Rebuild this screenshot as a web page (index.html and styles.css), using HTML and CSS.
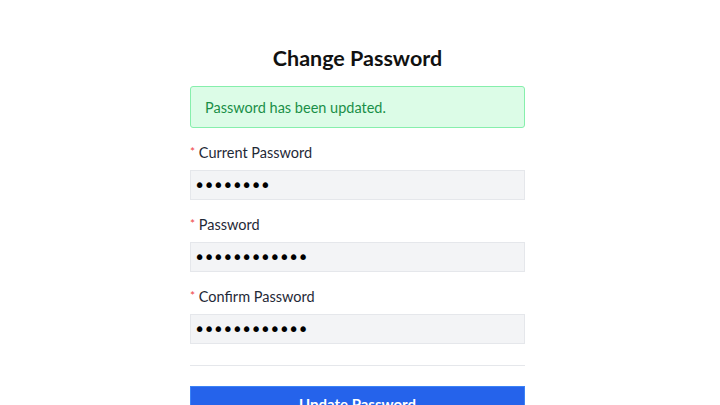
FILE: index.html
```html
<!DOCTYPE html>
<html lang="en">
<head>
<meta charset="utf-8">
<title>Change Password</title>
<link rel="stylesheet" href="styles.css">
</head>
<body>
<main class="page">
  <form class="card">
    <h1 class="title">Change Password</h1>
    <div class="alert">Password has been updated.</div>
    <div class="field">
      <label class="label"><span class="req">*</span> Current Password</label>
      <input class="input" type="password" value="12345678">
    </div>
    <div class="field">
      <label class="label"><span class="req">*</span> Password</label>
      <input class="input" type="password" value="123456789012">
    </div>
    <div class="field">
      <label class="label"><span class="req">*</span> Confirm Password</label>
      <input class="input" type="password" value="123456789012">
    </div>
    <hr class="divider">
    <button class="btn" type="button">Update Password</button>
  </form>
</main>
</body>
</html>
```
FILE: styles.css
```css
* { box-sizing: border-box; }
html, body { margin: 0; padding: 0; background: #fff; }
body {
  font-family: Lato, "Noto Sans", sans-serif;
  color: #111827;
  overflow: hidden;
  height: 405px;
}
.page {
  display: flex;
  justify-content: center;
  padding: 44px 5px 0 0;
}
.card {
  width: 335px;
  display: flex;
  flex-direction: column;
}
.title {
  margin: 0;
  font-size: 21.5px;
  line-height: 28px;
  font-weight: 700;
  text-align: center;
  color: #111;
}
.alert {
  margin-top: 14px;
  height: 42px;
  display: flex;
  align-items: center;
  padding: 0 14px;
  background: #dcfce7;
  border: 1px solid #86efac;
  border-radius: 3px;
  color: #1a8f47;
  font-size: 14.5px;
}
.field {
  display: flex;
  flex-direction: column;
  margin-top: 15px;
}
.label {
  display: block;
  height: 20px;
  font-size: 14.5px;
  line-height: 20px;
  color: #1f2937;
  margin-bottom: 7px;
}
.req {
  color: #ef4444;
  font-size: 12px;
  line-height: 1;
  vertical-align: 2px;
}
.input {
  height: 30px;
  background: #f3f4f6;
  border: 1px solid #e5e7eb;
  border-radius: 0;
  padding: 0 3px;
  font-size: 19px;
  letter-spacing: -1.8px;
  color: #000;
  font-family: "DejaVu Sans", sans-serif;
  outline: none;
}
.divider {
  margin: 21px 0 0;
  border: 0;
  border-top: 1px solid #e5e7eb;
}
.btn {
  margin-top: 20px;
  height: 36px;
  padding: 0;
  background: #2563eb;
  color: #fff;
  border: 1px solid #3b82f6;
  font-family: inherit;
  font-size: 15px;
  font-weight: 700;
}
```
